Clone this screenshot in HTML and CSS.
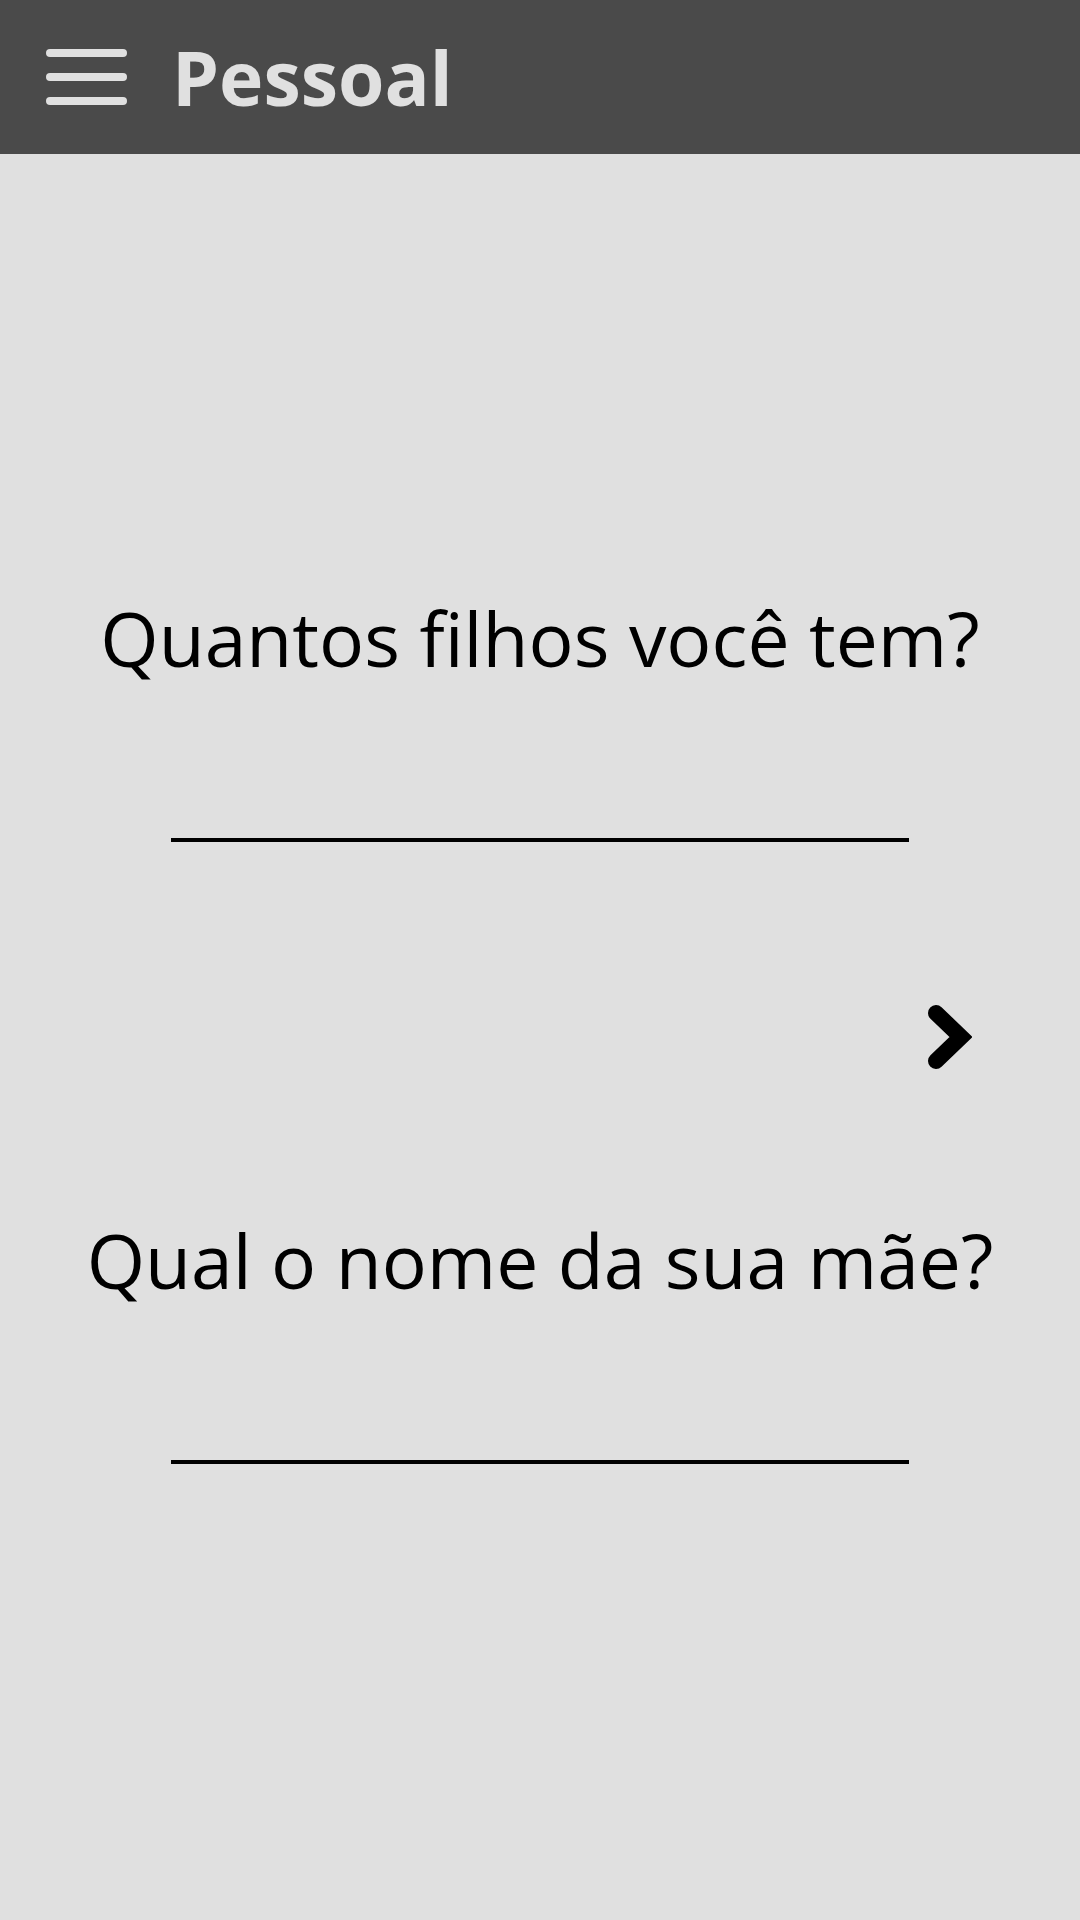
FILE: index.html
```html
<!DOCTYPE html>
<html lang="pt">
<head>
<meta charset="utf-8">
<title>Pessoal</title>
<link rel="stylesheet" href="styles.css">
</head>
<body>
<header class="topbar">
  <div class="menu-icon" aria-label="Menu">
    <span class="bar"></span>
    <span class="bar"></span>
    <span class="bar"></span>
  </div>
  <h1 class="title">Pessoal</h1>
</header>
<main class="content">
  <section class="question">
    <h2 class="question-text">Quantos filhos você tem?</h2>
    <div class="answer-line"></div>
  </section>
  <div class="nav-row">
    <svg class="chevron" width="44" height="64" viewBox="0 0 44 64" aria-label="Próximo">
      <polyline points="8,8 33,32 8,56" fill="none" stroke="#000" stroke-width="16" stroke-linecap="round" stroke-linejoin="miter"/>
    </svg>
  </div>
  <section class="question">
    <h2 class="question-text">Qual o nome da sua mãe?</h2>
    <div class="answer-line"></div>
  </section>
</main>
</body>
</html>
```

FILE: styles.css
```css
* {
  box-sizing: border-box;
}

html, body {
  margin: 0;
  padding: 0;
}

body {
  width: 1080px;
  min-height: 1920px;
  background: #e0e0e0;
  font-family: "Open Sans", "Noto Sans", sans-serif;
  color: #000;
}

.topbar {
  height: 154px;
  background: #4a4a4a;
  display: flex;
  align-items: center;
  padding-left: 46px;
}

.menu-icon {
  width: 81px;
  height: 56px;
  display: flex;
  flex-direction: column;
  justify-content: space-between;
}

.bar {
  display: block;
  height: 8px;
  border-radius: 4px;
  background: #e0e0e0;
}

.title {
  margin: 0 0 0 45px;
  font-size: 75px;
  font-weight: 700;
  color: #e0e0e0;
  line-height: normal;
}

.content {
  padding-top: 433px;
  display: flex;
  flex-direction: column;
}

.question {
  display: flex;
  flex-direction: column;
  align-items: center;
}

.question-text {
  margin: 0;
  font-size: 75px;
  font-weight: 400;
  line-height: normal;
  text-align: center;
}

.answer-line {
  margin-top: 149px;
  width: 738px;
  height: 4px;
  background: #000;
}

.nav-row {
  display: flex;
  justify-content: flex-end;
  padding-right: 108px;
  margin-top: 163px;
  margin-bottom: 140px;
}

.chevron {
  display: block;
}
```
